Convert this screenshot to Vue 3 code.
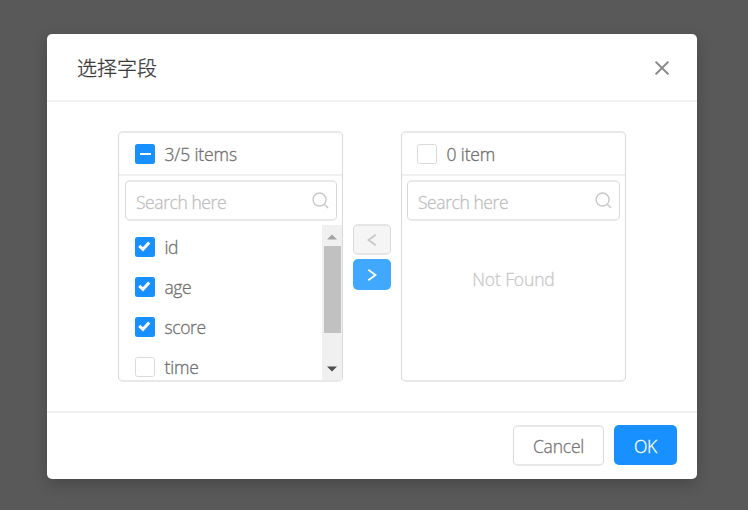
<script setup>
import { ref } from 'vue'

const items = ref([
  { name: 'id', checked: true },
  { name: 'age', checked: true },
  { name: 'score', checked: true },
  { name: 'time', checked: false },
])
</script>

<template>
  <div class="mask">
    <section class="modal" role="dialog">
      <header class="modal-header">
        <h1 class="title">选择字段</h1>
        <svg class="close" viewBox="0 0 14 14" aria-label="Close">
          <path d="M1.2 1.2 12.8 12.8M12.8 1.2 1.2 12.8" />
        </svg>
      </header>

      <main class="modal-body">
        <div class="panel">
          <div class="panel-header">
            <span class="box on"><i class="dash"></i></span>
            <span class="count">3/5 items</span>
          </div>
          <div class="search">
            <span class="placeholder">Search here</span>
            <svg class="lens" viewBox="0 0 18 18"><circle cx="8" cy="8" r="6.9" /><path d="m13 13 4 4" /></svg>
          </div>
          <div class="list">
            <ul class="items">
              <li v-for="item in items" :key="item.name" class="item">
                <span class="box" :class="{ on: item.checked }">
                  <svg v-if="item.checked" class="tick" viewBox="0 0 20 20"><path d="m4.2 8.9 3.8 3.4 6.2-6.7" /></svg>
                </span>
                <span class="label">{{ item.name }}</span>
              </li>
            </ul>
            <div class="scrollbar">
              <svg class="arrow up" viewBox="0 0 10 6"><path d="M0 5.5 5 .5l5 5z" /></svg>
              <div class="thumb"></div>
              <svg class="arrow down" viewBox="0 0 10 6"><path d="M0 .5h10l-5 5z" /></svg>
            </div>
          </div>
        </div>

        <div class="operations">
          <button class="move disabled" aria-label="Move left">
            <svg viewBox="0 0 10 12"><path d="M8.7.8 1.5 6l7.2 5.2" /></svg>
          </button>
          <button class="move active" aria-label="Move right">
            <svg viewBox="0 0 10 12"><path d="m1.3.8 7.2 5.2-7.2 5.2" /></svg>
          </button>
        </div>

        <div class="panel right">
          <div class="panel-header">
            <span class="box"></span>
            <span class="count">0 item</span>
          </div>
          <div class="search">
            <span class="placeholder">Search here</span>
            <svg class="lens" viewBox="0 0 18 18"><circle cx="8" cy="8" r="6.9" /><path d="m13 13 4 4" /></svg>
          </div>
          <p class="empty">Not Found</p>
        </div>
      </main>

      <footer class="modal-footer">
        <button class="btn cancel">Cancel</button>
        <button class="btn ok">OK</button>
      </footer>
    </section>
  </div>
</template>

<style>
body {
  margin: 0;
  background: #595959;
}
</style>

<style scoped>
.mask {
  box-sizing: border-box;
  width: 748px;
  height: 510px;
  padding: 33.6px 51px 0 47px;
  background: #595959;
  font-family: "Open Sans", "Noto Sans CJK SC", sans-serif;
  font-size: 17.5px;
  font-weight: 300;
  letter-spacing: -0.12px;
  -webkit-text-stroke: 0.3px currentColor;
  color: #707070;
  overflow: hidden;
}
.mask *, .mask *::before { box-sizing: border-box; }
.modal {
  display: flex;
  flex-direction: column;
  height: 445px;
  border-radius: 5px;
  background: #fff;
  box-shadow: 0 5px 15px rgba(0, 0, 0, 0.2);
}
.modal-header {
  display: flex;
  align-items: center;
  justify-content: space-between;
  height: 68.4px;
  padding: 0 28px 0 30px;
  border-bottom: 2px solid #f2f2f2;
}
.title {
  margin: 4px 0 0;
  font-size: 20px;
  line-height: 28px;
  font-weight: 300;
  letter-spacing: 0;
  color: #3a3a3a;
}
.close {
  width: 14px;
  height: 14px;
  margin-top: 3px;
  fill: none;
  stroke: #8c8c8c;
  stroke-width: 2;
  stroke-linecap: round;
}
.modal-body {
  display: flex;
  height: 309px;
  padding: 29px 0 0 71px;
}
.panel {
  width: 225px;
  height: 251px;
  border: solid;
  border-width: 2px 1px;
  border-color: #e8e8e8 #d9d9d9;
  border-radius: 5px;
  overflow: hidden;
}
.panel-header {
  display: flex;
  align-items: center;
  height: 43px;
  padding: 2px 0 0 16px;
  border-bottom: 2px solid #f0f0f0;
}
.right .panel-header { padding-left: 15px; }
.box {
  display: flex;
  flex: none;
  align-items: center;
  justify-content: center;
  width: 20px;
  height: 20px;
  border: 1px solid #dadada;
  border-radius: 2.5px;
  background: #fff;
}
.box.on {
  border: 0;
  background: #1890ff;
}
.dash {
  width: 11px;
  height: 2px;
  background: #fff;
}
.tick {
  width: 20px;
  height: 20px;
  fill: none;
  stroke: #fff;
  stroke-width: 3;
}
.count, .label {
  margin-left: 9.5px;
  line-height: 24px;
  white-space: nowrap;
}
.search {
  display: flex;
  align-items: center;
  justify-content: space-between;
  height: 41px;
  margin: 4px 5px 0 6px;
  padding: 0 7.5px 0 10px;
  border: solid;
  border-width: 2px 1px;
  border-color: #e8e8e8 #d9d9d9;
  border-radius: 5px;
}
.right .search { margin-left: 5px; }
.placeholder {
  margin-top: 3px;
  line-height: 24px;
  letter-spacing: -0.43px;
  color: #c0c0c0;
  white-space: nowrap;
}
.lens {
  width: 17px;
  height: 17px;
  margin-top: 1px;
  fill: none;
  stroke: #c8c8c8;
  stroke-width: 1.5;
}
.list {
  display: flex;
  height: 155px;
  margin-top: 4px;
  overflow: hidden;
}
.items {
  flex: 1;
  margin: 0;
  padding: 2px 0 0 16px;
  list-style: none;
}
.item {
  display: flex;
  align-items: center;
  height: 40px;
}
.label { letter-spacing: -0.4px; }
.item:last-child .label { letter-spacing: -0.2px; }
.scrollbar {
  display: flex;
  flex-direction: column;
  align-items: center;
  width: 20px;
  height: 155px;
  padding: 9px 0 8px;
  background: #f0f0f0;
}
.arrow {
  width: 10px;
  height: 6px;
}
.up { fill: #a3a3a3; }
.down {
  margin-top: auto;
  fill: #4d4d4d;
}
.thumb {
  width: 17px;
  height: 87px;
  margin-top: 6px;
  background: #c1c1c1;
}
.operations {
  display: flex;
  flex-direction: column;
  gap: 4px;
  width: 38px;
  margin: 93px 10px 0;
}
.move {
  display: flex;
  align-items: center;
  justify-content: center;
  height: 31px;
  padding: 2px 0 0;
  border-radius: 5px;
}
.move svg {
  width: 10px;
  height: 12px;
  fill: none;
  stroke: currentColor;
  stroke-width: 1.8;
}
.disabled {
  border: solid;
  border-width: 2px 1px;
  border-color: #e5e5e5 #dadada;
  background: #f5f5f5;
  color: #c8c8c8;
}
.active {
  border: 0;
  background: #40a9ff;
  color: #fff;
}
.empty {
  margin: 46px 0 0;
  line-height: 24px;
  text-align: center;
  color: #c8c8c8;
}
.modal-footer {
  display: flex;
  justify-content: flex-end;
  gap: 10px;
  height: 67.6px;
  padding: 12px 20px 0 0;
  border-top: 2px solid #f0f0f0;
}
.btn {
  height: 41px;
  padding: 2px 0 0;
  border-radius: 5px;
  font: inherit;
  letter-spacing: -0.2px;
}
.cancel {
  width: 91px;
  border: solid;
  border-width: 2px 1px;
  border-color: #e8e8e8 #d9d9d9;
  background: #fff;
  color: #757575;
}
.ok {
  width: 63px;
  height: 40.5px;
  border: 0;
  background: #1890ff;
  color: #fff;
}
</style>
